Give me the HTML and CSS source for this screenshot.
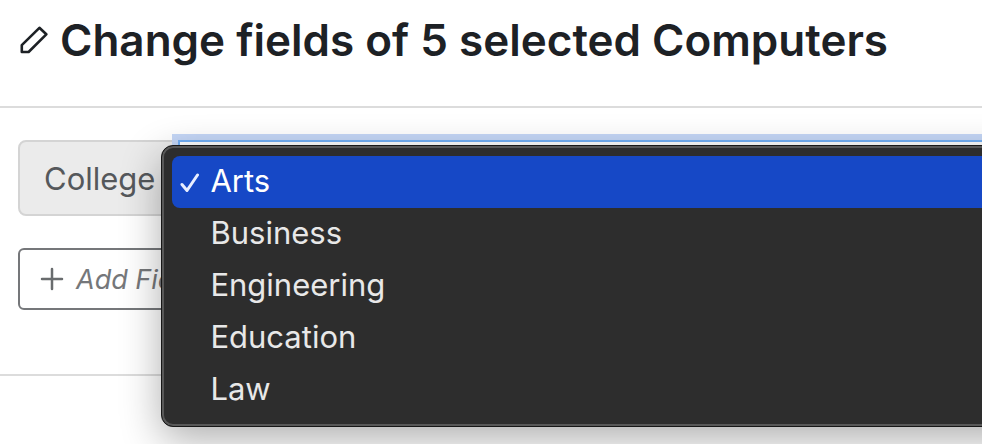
FILE: index.html
```
<!DOCTYPE html>
<html lang="en">
<head>
<meta charset="utf-8">
<title>Change fields of 5 selected Computers</title>
<link rel="stylesheet" href="styles.css">
</head>
<body>
<header class="header">
  <svg class="header-icon" viewBox="0 0 28 28" aria-hidden="true"><path d="M1.8 26V19.2L19.4 1.8L26.3 8.3L8.6 26Z"/></svg>
  <h1 class="title">Change fields of 5 selected Computers</h1>
</header>
<main class="content">
  <div class="field">
    <label class="field-label" for="college">College</label>
    <div class="field-control">
      <select class="select" id="college">
        <option selected>Arts</option>
        <option>Business</option>
        <option>Engineering</option>
        <option>Education</option>
        <option>Law</option>
      </select>
      <div class="menu" role="listbox" aria-label="College">
        <button class="option option-selected" type="button" role="option" aria-selected="true"><svg class="check" viewBox="0 0 20 20" aria-hidden="true"><path d="M2 11.5L7 17.5L17.5 2"/></svg>Arts</button>
        <button class="option" type="button" role="option" aria-selected="false">Business</button>
        <button class="option" type="button" role="option" aria-selected="false">Engineering</button>
        <button class="option" type="button" role="option" aria-selected="false">Education</button>
        <button class="option" type="button" role="option" aria-selected="false">Law</button>
      </div>
    </div>
  </div>
  <button class="add-field" type="button"><svg class="plus" viewBox="0 0 24 24" aria-hidden="true"><path d="M12 2V22M2 12H22"/></svg>Add Field</button>
</main>
</body>
</html>
```
FILE: styles.css
```
* {
  box-sizing: border-box;
}

body {
  min-height: 100vh;
  margin: 0;
  overflow-x: hidden;
  background: #fff;
  color: #1d2125;
  font-family: Inter, "Liberation Sans", sans-serif;
  font-size: 31px;
}

.header {
  display: flex;
  align-items: center;
  gap: 12px;
  padding: 12px 20px 38px;
  border-bottom: 2px solid #dcdcdc;
}

.header-icon {
  flex: none;
  width: 28px;
  height: 28px;
  fill: none;
  stroke: #1d2125;
  stroke-width: 2.6;
  stroke-linejoin: round;
}

.title {
  margin: 0;
  font-size: 44px;
  font-weight: 600;
  line-height: 56px;
  white-space: nowrap;
}

.content {
  padding: 32px 0 64px 18px;
  border-bottom: 2px solid #dcdcdc;
}

.field {
  display: flex;
  height: 76px;
  margin: 0 -24px 32px 0;
}

.field-label {
  display: flex;
  align-items: center;
  padding: 0 24px;
  border: 2px solid #d4d4d4;
  border-radius: 8px 0 0 8px;
  background: #ebebeb;
  color: #55585b;
}

.field-control {
  position: relative;
  flex: 1;
  margin-left: -3px;
}

.select {
  display: block;
  width: 100%;
  height: 100%;
  padding: 0 24px;
  appearance: none;
  border: 2px solid #74b0f6;
  border-radius: 0;
  outline: 0;
  background: #fff;
  box-shadow: 0 0 0 6px #c5d7f7;
  color: #1d2125;
  font: inherit;
}

.menu {
  position: absolute;
  top: 5px;
  left: -17px;
  right: -24px;
  padding: 10px;
  border: 1px solid #171717;
  border-radius: 12px;
  background: #2d2d2d;
  box-shadow: inset 0 0 0 2px #585858, 0 12px 40px rgba(0, 0, 0, 0.32);
}

.option {
  position: relative;
  display: block;
  width: 100%;
  height: 52px;
  padding: 0 38px 2px;
  border: 0;
  border-radius: 8px;
  background: none;
  color: #e8e8e8;
  font: inherit;
  line-height: 50px;
  text-align: left;
}

.option-selected {
  background: #1648c6;
  color: #fff;
}

.check {
  position: absolute;
  top: 17px;
  left: 8px;
  width: 20px;
  height: 20px;
  fill: none;
  stroke: #e8eeff;
  stroke-width: 3;
  stroke-linecap: round;
  stroke-linejoin: round;
}

.add-field {
  display: flex;
  align-items: center;
  gap: 12px;
  height: 62px;
  padding: 0 20px;
  border: 2px solid #75777a;
  border-radius: 6px;
  background: #fff;
  color: #75777a;
  font: inherit;
  font-size: 27px;
  font-style: italic;
}

.plus {
  width: 24px;
  height: 24px;
  fill: none;
  stroke: #696c6e;
  stroke-width: 2.5;
  stroke-linecap: round;
}
```
